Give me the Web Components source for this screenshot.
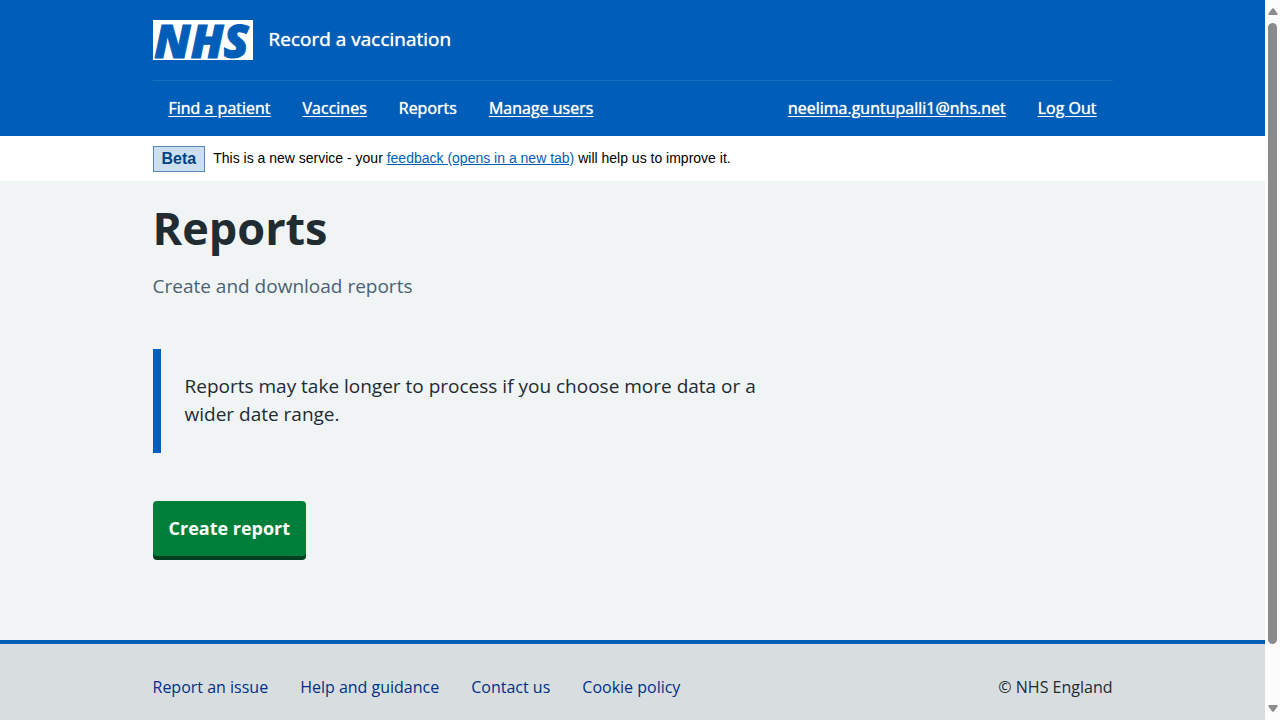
<!DOCTYPE html>
<html lang="en">
<head>
<meta charset="utf-8">
<meta name="viewport" content="width=device-width, initial-scale=1">
<title>Reports – Record a vaccination – NHS</title>
<style>
  html, body { margin: 0; min-height: 100%; }
  body {
    background: #f0f4f5;
    color: #212b32;
    font-family: "Open Sans", "Noto Sans", Arial, sans-serif;
    --blue: #005eb8;
    --column: 960px;
  }
</style>
</head>
<body>
<rv-page>
  <rv-header></rv-header>
  <rv-phase-banner></rv-phase-banner>
  <rv-main>
    <span slot="title">Reports</span>
    <span slot="caption">Create and download reports</span>
    <rv-inset>Reports may take longer to process if you choose more data or a wider date range.</rv-inset>
    <rv-button>Create report</rv-button>
  </rv-main>
  <rv-footer></rv-footer>
</rv-page>

<script>
  const define = (name, html) => {
    const template = document.createElement('template');
    template.innerHTML = html;
    customElements.define(name, class extends HTMLElement {
      constructor() {
        super();
        this.attachShadow({ mode: 'open' }).append(template.content.cloneNode(true));
      }
    });
  };

  define('rv-page', `
    <style>
      :host { display: grid; grid-template-columns: minmax(0, 1fr) 15px; min-height: 100vh; }
      .content { display: flex; flex-direction: column; }
      ::slotted(rv-main) { flex: 1; }
    </style>
    <div class="content"><slot></slot></div>
    <rv-scrollbar></rv-scrollbar>
  `);

  define('rv-scrollbar', `
    <style>
      :host {
        display: flex; flex-direction: column; align-items: center; justify-content: space-between;
        box-sizing: border-box; height: 100vh; position: sticky; top: 0;
        padding: 8px 0; background: #fcfcfc;
      }
      svg { display: block; width: 10px; height: 7px; fill: #8b8b8b; }
      .track { flex: 1; width: 9px; margin: 8px 0 7px; }
      .thumb { height: 92%; border-radius: 5px; background: #8b8b8b; }
    </style>
    <svg viewBox="0 0 10 7" aria-hidden="true"><path d="M4.2.6Q5-.3 5.8.6L9.5 5.4Q10.2 7 8.8 7H1.2Q-.2 7 .5 5.4Z"/></svg>
    <div class="track"><div class="thumb"></div></div>
    <svg viewBox="0 0 10 7" aria-hidden="true"><path d="M4.2 6.4Q5 7.3 5.8 6.4L9.5 1.6Q10.2 0 8.8 0H1.2Q-.2 0 .5 1.6Z"/></svg>
  `);

  define('rv-logo', `
    <style>
      :host {
        display: flex; align-items: center; justify-content: center;
        width: 100px; height: 40px;
        background: #fff; color: var(--blue);
        font-size: 46px; line-height: 40px; font-weight: 800; font-style: italic;
        -webkit-text-stroke: 1px var(--blue);
      }
      span { padding-right: 2px; }
    </style>
    <span>NHS</span>
  `);

  define('rv-header', `
    <style>
      :host { display: block; background: var(--blue); color: #fff; }
      .wrap { max-width: var(--column); margin: 0 auto; }
      .brand { display: flex; align-items: flex-start; gap: 16px; padding: 20px 0; }
      .brand a { color: inherit; text-decoration: none; }
      .service { font-size: 19px; line-height: 38px; text-shadow: 0 0 1px currentColor; }
      nav { border-top: 1px solid #1a6ebf; }
      ul { display: flex; gap: 32px; margin: 0; padding: 16px; list-style: none; }
      li { font-size: 16px; line-height: 23px; white-space: nowrap; text-shadow: 0 0 1px currentColor; }
      li a { color: inherit; text-underline-offset: 2px; }
      li a[aria-current] { text-decoration: none; }
      .account { margin-left: auto; }
    </style>
    <header>
      <div class="wrap">
        <div class="brand">
          <a href="#" aria-label="NHS"><rv-logo></rv-logo></a>
          <a class="service" href="#">Record a vaccination</a>
        </div>
        <nav aria-label="Menu">
          <ul>
            <li><a href="#">Find a patient</a></li>
            <li><a href="#">Vaccines</a></li>
            <li><a href="#" aria-current="page">Reports</a></li>
            <li><a href="#">Manage users</a></li>
            <li class="account"><a href="#">neelima.guntupalli1@nhs.net</a></li>
            <li><a href="#">Log Out</a></li>
          </ul>
        </nav>
      </div>
    </header>
  `);

  define('rv-phase-banner', `
    <style>
      :host { display: block; background: #fff; color: #000; font-family: "Liberation Sans", Arial, sans-serif; }
      .wrap {
        max-width: var(--column); margin: 0 auto; padding: 10px 0 9px;
        display: flex; align-items: flex-start; gap: 8px;
      }
      .tag {
        border: 1px solid #5a87b8; background: #ccdff1; color: #004281;
        padding: 0 8px; font-size: 16px; line-height: 24px; font-weight: 700;
      }
      p { margin: 0; font-size: 14px; line-height: 24px; }
      a { color: var(--blue); }
    </style>
    <div class="wrap">
      <strong class="tag">Beta</strong>
      <p>This is a new service - your <a href="#">feedback (opens in a new tab)</a> will help us to improve it.</p>
    </div>
  `);

  define('rv-main', `
    <style>
      :host { display: block; }
      main { max-width: var(--column); margin: 0 auto; padding: 20px 0 80px; }
      h1 { margin: 0; font-size: 45px; line-height: 54px; font-weight: 700; }
      .caption { margin: 16px 0 48px; font-size: 19px; line-height: 30px; color: #4c6272; }
    </style>
    <main>
      <h1><slot name="title"></slot></h1>
      <p class="caption"><slot name="caption"></slot></p>
      <slot></slot>
    </main>
  `);

  define('rv-inset', `
    <style>
      :host {
        display: block; box-sizing: border-box; max-width: 640px;
        margin-bottom: 48px; padding: 23px 24px 25px;
        border-left: 8px solid var(--blue);
      }
      p { margin: 0; font-size: 19px; line-height: 28px; }
    </style>
    <p><slot></slot></p>
  `);

  define('rv-button', `
    <style>
      :host { display: block; }
      button {
        display: block; margin: 0 0 4px; padding: 13px 16px 14px; border: 0; border-radius: 4px;
        background: #007f3b; box-shadow: 0 4px 0 #00401e; color: #fff;
        font: 700 18px/28px "Open Sans", "Noto Sans", Arial, sans-serif; cursor: pointer;
      }
    </style>
    <button type="button"><slot></slot></button>
  `);

  define('rv-footer', `
    <style>
      :host { display: block; background: #d8dde0; border-top: 4px solid var(--blue); }
      .wrap {
        max-width: var(--column); margin: 0 auto; padding: 32px 0 21px;
        display: flex; justify-content: space-between;
        font-size: 16px; line-height: 23px;
      }
      ul { display: flex; gap: 32px; margin: 0; padding: 0; list-style: none; }
      a { color: #003087; text-decoration: none; }
      p { margin: 0; }
    </style>
    <footer>
      <div class="wrap">
        <ul>
          <li><a href="#">Report an issue</a></li>
          <li><a href="#">Help and guidance</a></li>
          <li><a href="#">Contact us</a></li>
          <li><a href="#">Cookie policy</a></li>
        </ul>
        <p>© NHS England</p>
      </div>
    </footer>
  `);
</script>
</body>
</html>
